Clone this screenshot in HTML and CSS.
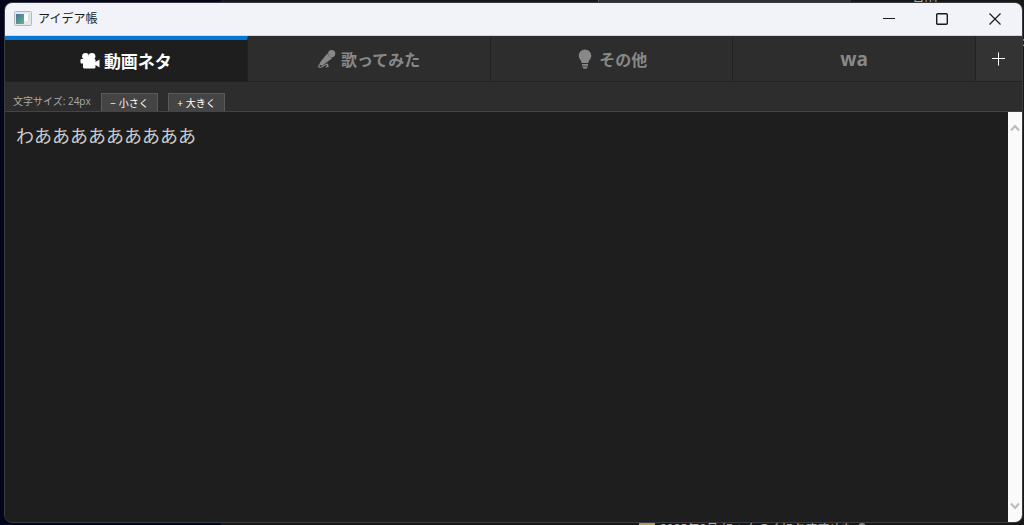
FILE: index.html
```html
<!DOCTYPE html>
<html lang="ja">
<head>
<meta charset="utf-8">
<meta name="viewport" content="width=device-width, initial-scale=1">
<title>アイデア帳</title>
<link rel="stylesheet" href="styles.css">
</head>
<body>
<div class="desktop">
  <div class="backdrop" aria-hidden="true">
    <div class="backdrop-pane"></div>
    <div class="backdrop-highlight"></div>
    <span class="backdrop-heading">名前</span>
    <span class="backdrop-side">:</span>
    <div class="backdrop-file"><i class="folder"></i><span>2025年2月 にゃんつくにおすすめも</span><i class="status"></i></div>
  </div>
  <main class="window">
    <header class="titlebar">
      <svg class="app-icon" viewBox="0 0 18 16">
        <defs><linearGradient id="pane" x1="0" y1="0" x2="1" y2="1"><stop offset="0" stop-color="#4773a5"/><stop offset="1" stop-color="#62b77d"/></linearGradient></defs>
        <rect x=".5" y=".5" width="17" height="14" rx="1" fill="#e5e8e9" stroke="#b3b7bb"/>
        <rect x="2" y="3" width="8" height="10" fill="url(#pane)"/>
        <rect x="10" y="3" width="4" height="7" fill="#fff"/>
        <rect x="14" y="3" width="2" height="7" fill="#cfe4d8"/>
      </svg>
      <h1 class="title">アイデア帳</h1>
      <div class="controls">
        <button class="control" aria-label="最小化"><svg viewBox="0 0 12 12"><path d="M0 5.500h12"/></svg></button>
        <button class="control" aria-label="最大化"><svg viewBox="0 0 12 12"><rect x=".7" y=".7" width="10.600" height="10.600" rx="1" stroke-width="1.400"/></svg></button>
        <button class="control" aria-label="閉じる"><svg viewBox="0 0 12 12"><path d="M.5.5l11 11M11.500.5l-11 11" stroke-width="1.200"/></svg></button>
      </div>
    </header>
    <nav class="tabs">
      <button class="tab tab-active">
        <svg class="tab-icon" viewBox="0 0 20 18"><circle cx="5.500" cy="4.300" r="3.400"/><circle cx="12" cy="4.300" r="3.400"/><path d="M5 5h8v3H5zM.5 8Q.5 7 1.500 7H14.500q1 0 1 1v2L19.500 7.500v8L15.500 13v2q0 1.500-1.500 1.500H4.500Q3 16.500 3 15v-3.500H1.500Q.5 11.500.5 10.500z"/></svg>
        <span>動画ネタ</span>
      </button>
      <button class="tab">
        <svg class="tab-icon" viewBox="0 0 20 18"><circle cx="14.700" cy="3.600" r="3.600"/><path d="M10.500 3.200Q11 6.800 15.800 7.800L13.500 9.600 5 15.800 2.800 14.500 2.600 13z"/><path d="M4 14q-2.500 1-2.300 2.500.3 1.400 3.300.2l3-1.800q2.500-1.500 2.700.1l-1 1.700 2-.5" fill="none" stroke="currentColor" stroke-width="1.200"/></svg>
        <span>歌ってみた</span>
      </button>
      <button class="tab">
        <svg class="tab-icon" viewBox="0 0 20 18"><path d="M10-.5a6.300 6.300 0 0 0-6.300 6.300c0 3.200 2.800 4.200 3 7.200h6.600c.2-3 3-4 3-7.200A6.300 6.300 0 0 0 10-.5zM7 14h6v1.800H7zM7.500 16.500h5v.8q-.8 1.500-2.500 1.500t-2.500-1.500z"/></svg>
        <span>その他</span>
      </button>
      <button class="tab tab-latin">wa</button>
      <button class="tab-add" aria-label="タブを追加"><svg viewBox="0 0 14 14"><path d="M6.500 .5v13M0 6.500h13"/></svg></button>
    </nav>
    <div class="toolbar">
      <span class="size-label">文字サイズ: 24px</span>
      <button class="size-button">− 小さく</button>
      <button class="size-button">+ 大きく</button>
    </div>
    <section class="editor">
      <textarea class="memo" aria-label="メモ" spellcheck="false">わあああああああああ</textarea>
      <div class="scrollbar">
        <button class="scroll-arrow" aria-label="上へ"><svg viewBox="0 0 10 8"><path d="M1 6.500l4-4.500 4 4.500"/></svg></button>
        <button class="scroll-arrow" aria-label="下へ"><svg viewBox="0 0 10 8"><path d="M1 1.500L5 6l4-4.500"/></svg></button>
      </div>
    </section>
  </main>
</div>
</body>
</html>
```
FILE: styles.css
```css
* { box-sizing: border-box; }

body {
  margin: 0;
  font-family: "Open Sans", "Noto Sans CJK JP", sans-serif;
}

button {
  margin: 0;
  padding: 0;
  border: 0;
  background: none;
  color: inherit;
  font: inherit;
}

svg { display: block; overflow: visible; }

.desktop {
  position: relative;
  display: flex;
  height: 100vh;
  padding: 2px 1px 2px 4px;
  overflow: hidden;
  background: #03061a;
}

/* Content of the windows underneath, seen only at the edges */
.backdrop { position: absolute; inset: 0; color: #aaa; font-size: 12px; line-height: 16px; overflow: hidden; }
.backdrop-pane { position: absolute; inset: 0 0 0 221px; background: #171717; }
.backdrop-highlight { position: absolute; top: 0; left: 598px; width: 253px; height: 3px; border-left: 1px solid #555; background: #303030; }
.backdrop-heading { position: absolute; top: -12px; left: 910px; font-size: 14px; }
.backdrop-side { position: absolute; top: 34px; right: -1px; }
.backdrop-file { position: absolute; bottom: -12px; left: 639px; display: flex; align-items: flex-start; gap: 5px; }
.folder { width: 16px; height: 14px; background: #b49b55; }
.status { width: 8px; height: 8px; margin-top: 2px; border-radius: 50%; background: #888; }

.window {
  position: relative;
  flex: 1;
  display: flex;
  flex-direction: column;
  overflow: hidden;
  border: 1px solid #3a3b40;
  border-radius: 8px;
  background: #2d2d2d;
}

.titlebar {
  display: flex;
  align-items: center;
  height: 33px;
  padding-left: 9px;
  border-bottom: 1px solid #d6d7da;
  background: #f1f3f9;
  color: #1b1b1b;
}
.app-icon { width: 18px; height: 16px; }
.title { margin: 0 0 0 6px; font-size: 12px; line-height: 16px; font-weight: 400; }
.controls { display: flex; margin-left: auto; padding-right: 1px; }
.control { display: grid; place-items: center; width: 53px; height: 32px; }
.control svg { width: 12px; height: 12px; fill: none; stroke: #1b1b1b; }

.tabs {
  display: flex;
  height: 46px;
  border-bottom: 1px solid #222;
  color: #888;
}
.tab {
  flex: 1;
  display: flex;
  align-items: center;
  justify-content: center;
  gap: 4px;
  border-right: 1px solid #222;
  font-size: 16px;
  font-weight: 700;
}
.tab-active {
  border-top: 4px solid #0078d7;
  background: #1e1e1e;
  color: #fff;
  font-size: 17px;
}
.tab-latin { font-size: 19px; }
.tab-icon { width: 20px; height: 18px; fill: currentColor; }
.tab-add { display: grid; place-items: center; width: 46px; background: #333; }
.tab-add svg { width: 14px; height: 14px; fill: none; stroke: #fff; stroke-width: 1; }

.toolbar {
  display: flex;
  align-items: flex-end;
  height: 30px;
  padding-left: 8px;
  border-bottom: 1px solid #444;
}
.size-label { width: 88px; color: #aaa; font-size: 10px; line-height: 19px; }
.size-button {
  width: 57px;
  height: 18px;
  margin-right: 10px;
  border: 1px solid #5a5a5a;
  border-bottom: 0;
  background: #444;
  color: #fff;
  font-size: 10px;
  line-height: 16px;
}

.editor { flex: 1; display: flex; min-height: 0; background: #1e1e1e; }
.memo {
  flex: 1;
  padding: 10px 11px;
  border: 0;
  outline: 0;
  resize: none;
  background: #1e1e1e;
  color: #ccc;
  font-family: "Noto Sans CJK JP", sans-serif;
  font-size: 18px;
  font-weight: 400;
  line-height: 26px;
}
.scrollbar {
  display: flex;
  flex-direction: column;
  justify-content: space-between;
  width: 14px;
  padding: 12px 2px;
  background: #fafafa;
}
.scroll-arrow { width: 10px; height: 8px; }
.scroll-arrow svg { width: 10px; height: 8px; fill: none; stroke: #bbb; stroke-width: 2; }
```
